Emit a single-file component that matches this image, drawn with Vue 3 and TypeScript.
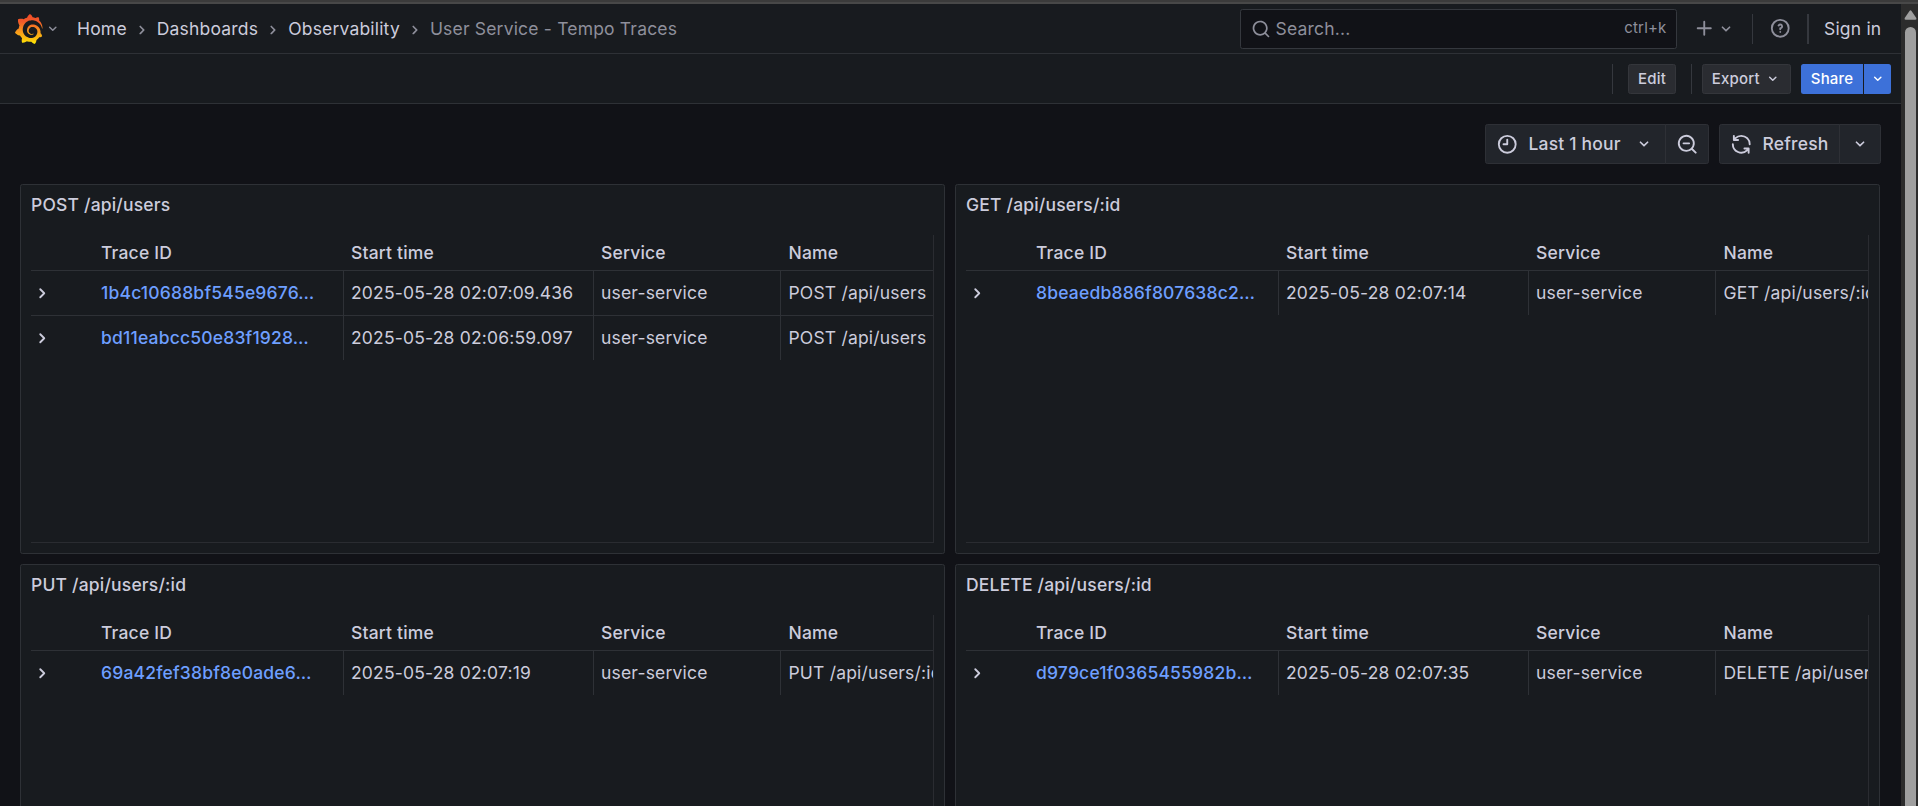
<script setup lang="ts">
interface TraceRow {
  id: string
  start: string
  service: string
  name: string
}
interface Panel {
  title: string
  rows: TraceRow[]
}

const icons = {
  down: 'M17,9.17a1,1,0,0,0-1.41,0L12,12.71,8.46,9.17a1,1,0,0,0-1.41,0,1,1,0,0,0,0,1.42l4.24,4.24a1,1,0,0,0,1.42,0L17,10.59A1,1,0,0,0,17,9.17Z',
  right: 'M14.83,11.29,10.59,7.05a1,1,0,0,0-1.42,0,1,1,0,0,0,0,1.41L12.71,12,9.17,15.54a1,1,0,0,0,0,1.41,1,1,0,0,0,.71.29,1,1,0,0,0,.71-.29l4.24-4.24A1,1,0,0,0,14.83,11.29Z',
  search: 'M21.71,20.29,18,16.61A9,9,0,1,0,16.61,18l3.68,3.68a1,1,0,0,0,1.42,0A1,1,0,0,0,21.71,20.29ZM11,18a7,7,0,1,1,7-7A7,7,0,0,1,11,18Z',
  minus: 'M14,10H8a1,1,0,0,0,0,2h6a1,1,0,0,0,0-2Z',
  plus: 'M19,11H13V5a1,1,0,0,0-2,0v6H5a1,1,0,0,0,0,2h6v6a1,1,0,0,0,2,0V13h6a1,1,0,0,0,0-2Z',
  help: 'M11.29,15.29a1.58,1.58,0,0,0-.12.15.76.76,0,0,0-.09.18.64.64,0,0,0-.06.18,1.36,1.36,0,0,0,0,.2.84.84,0,0,0,.08.38.9.9,0,0,0,.54.54.94.94,0,0,0,.76,0,.9.9,0,0,0,.54-.54A1,1,0,0,0,13,16a1,1,0,0,0-.29-.71A1,1,0,0,0,11.29,15.29ZM12,2A10,10,0,1,0,22,12,10,10,0,0,0,12,2Zm0,18a8,8,0,1,1,8-8A8,8,0,0,1,12,20ZM12,7A3,3,0,0,0,9.4,8.5a1,1,0,1,0,1.73,1A1,1,0,0,1,12,9a1,1,0,0,1,0,2,1,1,0,0,0-1,1v1a1,1,0,0,0,2,0v-.18A3,3,0,0,0,12,7Z',
  clock: 'M12,2A10,10,0,1,0,22,12,10,10,0,0,0,12,2Zm0,18a8,8,0,1,1,8-8A8,8,0,0,1,12,20ZM12,6a1,1,0,0,0-1,1v4H8a1,1,0,0,0,0,2h4a1,1,0,0,0,1-1V7A1,1,0,0,0,12,6Z',
  sync: 'M19.91,15.51H15.38a1,1,0,0,0,0,2h2.4A8,8,0,0,1,4,12a1,1,0,0,0-2,0,10,10,0,0,0,16.88,7.23V21a1,1,0,0,0,2,0V16.5A1,1,0,0,0,19.91,15.51ZM12,2A10,10,0,0,0,5.12,4.77V3a1,1,0,0,0-2,0V7.5a1,1,0,0,0,1,1h4.5a1,1,0,0,0,0-2H6.22A8,8,0,0,1,20,12a1,1,0,0,0,2,0A10,10,0,0,0,12,2Z',
  logo: 'M342,161.2c-0.6-6.1-1.6-13.1-3.6-20.9c-2-7.7-5-16.2-9.4-25c-4.4-8.8-10.1-17.9-17.5-26.8c-2.9-3.5-6.1-6.9-9.5-10.2c5.1-20.3-6.2-37.9-6.2-37.9c-19.5-1.2-31.9,6.1-36.5,9.4c-0.8-0.3-1.5-0.7-2.3-1c-3.3-1.3-6.7-2.6-10.3-3.7c-3.5-1.1-7.1-2.1-10.8-3c-3.7-0.9-7.4-1.6-11.2-2.2c-0.7-0.1-1.3-0.2-2-0.3c-8.5-27.2-32.9-38.6-32.9-38.6c-27.3,17.3-32.4,41.5-32.4,41.5s-0.1,0.5-0.3,1.4c-1.5,0.4-3,0.9-4.5,1.3c-2.1,0.6-4.2,1.4-6.2,2.2c-2.1,0.8-4.1,1.6-6.2,2.5c-4.1,1.8-8.2,3.8-12.2,6c-3.9,2.2-7.7,4.6-11.4,7.1c-0.5-0.2-1-0.4-1-0.4c-37.8-14.4-71.3,2.9-71.3,2.9c-3.1,40.2,15.1,65.5,18.7,70.1c-0.9,2.5-1.7,5-2.5,7.5c-2.8,9.1-4.9,18.4-6.2,28.1c-0.2,1.4-0.4,2.8-0.5,4.2C18.8,192.7,8.5,228,8.5,228c29.1,33.5,63.1,35.6,63.1,35.6c0,0,0.1-0.1,0.1-0.1c4.3,7.7,9.3,15,14.9,21.9c2.4,2.9,4.8,5.6,7.4,8.3c-10.6,30.4,1.5,55.6,1.5,55.6c32.4,1.2,53.7-14.2,58.2-17.7c3.2,1.1,6.5,2.1,9.8,2.9c10,2.6,20.2,4.1,30.4,4.5c2.5,0.1,5.1,0.2,7.6,0.1l1.2,0l0.8,0l1.6,0l1.6-0.1l0,0.1c15.3,21.8,42.1,24.9,42.1,24.9c19.1-20.1,20.2-40.1,20.2-44.4l0,0c0,0,0-0.1,0-0.3c0-0.4,0-0.6,0-0.6l0,0c0-0.3,0-0.6,0-0.9c4-2.8,7.8-5.8,11.4-9.1c7.6-6.9,14.3-14.8,19.9-23.3c0.5-0.8,1-1.6,1.5-2.4c21.6,1.2,36.9-13.4,36.9-13.4c-3.6-22.5-16.4-33.5-19.1-35.6l0,0c0,0-0.1-0.1-0.3-0.2c-0.2-0.1-0.2-0.2-0.2-0.2c0,0,0,0,0,0c-0.1-0.1-0.3-0.2-0.5-0.3c0.1-1.4,0.2-2.7,0.3-4.1c0.2-2.4,0.2-4.9,0.2-7.3l0-1.8l0-0.9l0-0.5c0-0.6,0-0.4,0-0.6l-0.1-1.5l-0.1-2c0-0.7-0.1-1.3-0.2-1.9c-0.1-0.6-0.1-1.3-0.2-1.9l-0.2-1.9l-0.3-1.9c-0.4-2.5-0.8-4.9-1.4-7.4c-2.3-9.7-6.1-18.9-11-27.2c-5-8.3-11.2-15.6-18.3-21.8c-7-6.2-14.9-11.2-23.1-14.9c-8.3-3.7-16.9-6.1-25.5-7.2c-4.3-0.6-8.6-0.8-12.9-0.7l-1.6,0l-0.4,0c-0.1,0-0.6,0-0.5,0l-0.7,0l-1.6,0.1c-0.6,0-1.2,0.1-1.7,0.1c-2.2,0.2-4.4,0.5-6.5,0.9c-8.6,1.6-16.7,4.7-23.8,9c-7.1,4.3-13.3,9.6-18.3,15.6c-5,6-8.9,12.7-11.6,19.6c-2.7,6.9-4.2,14.1-4.6,21c-0.1,1.7-0.1,3.5-0.1,5.2c0,0.4,0,0.9,0,1.3l0.1,1.4c0.1,0.8,0.1,1.7,0.2,2.5c0.3,3.5,1,6.9,1.9,10.1c1.9,6.5,4.9,12.4,8.6,17.4c3.7,5,8.2,9.1,12.9,12.4c4.7,3.2,9.8,5.5,14.8,7c5,1.5,10,2.1,14.7,2.1c0.6,0,1.2,0,1.7,0c0.3,0,0.6,0,0.9,0c0.3,0,0.6,0,0.9-0.1c0.5,0,1-0.1,1.5-0.1c0.1,0,0.3,0,0.4-0.1l0.5-0.1c0.3,0,0.6-0.1,0.9-0.1c0.6-0.1,1.1-0.2,1.7-0.3c0.6-0.1,1.1-0.2,1.6-0.4c1.1-0.2,2.1-0.6,3.1-0.9c2-0.7,4-1.5,5.7-2.4c1.8-0.9,3.4-2,5-3c0.4-0.3,0.9-0.6,1.3-1c1.6-1.3,1.9-3.7,0.6-5.3c-1.1-1.4-3.1-1.8-4.7-0.9c-0.4,0.2-0.8,0.4-1.2,0.6c-1.4,0.7-2.8,1.3-4.3,1.8c-1.5,0.5-3.1,0.9-4.7,1.2c-0.8,0.1-1.6,0.2-2.5,0.3c-0.4,0-0.8,0.1-1.3,0.1c-0.4,0-0.9,0-1.2,0c-0.4,0-0.8,0-1.2,0c-0.5,0-1,0-1.5-0.1l-0.6,0c-0.2,0-0.5,0-0.7-0.1c-0.5-0.1-0.9-0.1-1.4-0.2c-3.7-0.5-7.4-1.6-10.9-3.2c-3.6-1.6-7-3.8-10.1-6.6c-3.1-2.8-5.8-6.1-7.9-9.9c-2.1-3.8-3.6-8-4.3-12.4c-0.3-2.2-0.5-4.5-0.4-6.7c0-0.6,0.1-1.2,0.1-1.8l0-0.8c0-0.3,0.1-0.6,0.1-0.9c0.1-1.2,0.3-2.4,0.5-3.6c1.7-9.6,6.5-19,13.9-26.1c1.9-1.8,3.9-3.4,6-4.9c2.1-1.5,4.4-2.8,6.8-3.9c2.4-1.1,4.8-2,7.4-2.7c2.5-0.7,5.1-1.1,7.8-1.4c1.3-0.1,2.6-0.2,4-0.2c0.4,0,0.6,0,0.9,0l2.2,0l1.1,0.1c2.9,0.2,5.7,0.6,8.5,1.3c5.6,1.2,11.1,3.3,16.2,6.1c10.2,5.7,18.9,14.5,24.2,25.1c2.7,5.3,4.6,11,5.5,16.9c0.2,1.5,0.4,3,0.5,4.5l0.2,2.2l0,4.3c0,0.7-0.1,1.9-0.1,2.6c-0.1,1.6-0.3,3.3-0.5,4.9c-0.2,1.6-0.5,3.2-0.8,4.8c-0.3,1.6-0.7,3.2-1.1,4.7c-0.8,3.1-1.8,6.2-3,9.3c-2.4,6-5.6,11.8-9.4,17.1c-7.7,10.6-18.2,19.2-30.2,24.7c-6,2.7-12.3,4.7-18.8,5.7c-3.2,0.6-6.5,0.9-9.8,1l-4.6,0c-1.8,0-3.5-0.1-5.3-0.3c-7-0.5-13.9-1.8-20.7-3.7c-6.7-1.9-13.2-4.6-19.4-7.8c-12.3-6.6-23.4-15.6-32-26.5c-4.3-5.4-8.1-11.3-11.2-17.4c-3.1-6.1-5.6-12.6-7.4-19.1c-1.8-6.6-2.9-13.3-3.4-20.1l-0.1-1.3l0-6c0-0.8,0-1.7,0-2.5c0.1-3.3,0.4-6.8,0.8-10.2c0.4-3.4,1-6.9,1.7-10.3c0.7-3.4,1.5-6.8,2.5-10.2c1.9-6.7,4.3-13.2,7.1-19.3c5.7-12.2,13.1-23.1,22-31.8c2.2-2.2,4.5-4.2,6.9-6.2c2.4-1.9,4.9-3.7,7.5-5.4c2.5-1.7,5.2-3.2,7.9-4.6c1.3-0.7,2.7-1.4,4.1-2c1.4-0.6,2.8-1.2,4.2-1.8c2.8-1.2,5.7-2.2,8.7-3.1c1.5-0.5,2.9-0.9,4.4-1.3c1.5-0.4,3-0.8,4.5-1.1c1.5-0.3,3-0.7,4.6-1l4.6-0.8c0.8-0.1,1.5-0.2,2.3-0.3c1.7-0.2,3.5-0.4,5.2-0.6l3.8-0.4l5-0.3c0.7,0,1.5-0.1,2.2-0.1c2.9-0.1,5.9-0.1,8.8,0c5.8,0.2,11.5,0.9,17,1.9c11.1,2.1,21.5,5.6,31,10.3c9.5,4.6,17.9,10.3,25.3,16.5c0.5,0.4,0.9,0.8,1.4,1.2c0.4,0.4,0.9,0.8,1.3,1.2c0.9,0.8,1.7,1.6,2.6,2.4c0.9,0.8,1.7,1.6,2.5,2.4c0.8,0.8,1.6,1.6,2.4,2.5c3.1,3.3,6,6.6,8.6,10c5.2,6.7,9.4,13.5,12.7,19.9c0.8,1.6,1.6,3.2,2.3,4.8c0.8,1.5,1.5,3,2.1,4.6c1.2,3,2.4,5.9,3.3,8.6c1.5,4.4,2.6,8.3,3.5,11.7c0.3,1.4,1.6,2.3,3,2.1c1.5-0.1,2.6-1.3,2.6-2.8C342.6,170.4,342.5,166.1,342,161.2z',
}

const crumbs: string[] = ['Home', 'Dashboards', 'Observability']
const columns: string[] = ['', 'Trace ID', 'Start time', 'Service', 'Name']

const panels: Panel[] = [
  {
    title: 'POST /api/users',
    rows: [
      { id: '1b4c10688bf545e9676…', start: '2025-05-28 02:07:09.436', service: 'user-service', name: 'POST /api/users' },
      { id: 'bd11eabcc50e83f1928…', start: '2025-05-28 02:06:59.097', service: 'user-service', name: 'POST /api/users' },
    ],
  },
  {
    title: 'GET /api/users/:id',
    rows: [{ id: '8beaedb886f807638c2…', start: '2025-05-28 02:07:14', service: 'user-service', name: 'GET /api/users/:id' }],
  },
  {
    title: 'PUT /api/users/:id',
    rows: [{ id: '69a42fef38bf8e0ade6…', start: '2025-05-28 02:07:19', service: 'user-service', name: 'PUT /api/users/:id' }],
  },
  {
    title: 'DELETE /api/users/:id',
    rows: [{ id: 'd979ce1f0365455982b…', start: '2025-05-28 02:07:35', service: 'user-service', name: 'DELETE /api/users/:id' }],
  },
]
</script>

<template>
  <div class="window">
    <div class="edge"></div>
    <div class="body">
      <div class="app">
        <header class="nav">
          <svg class="logo" viewBox="0 0 351 365">
            <defs>
              <linearGradient id="flame" gradientUnits="userSpaceOnUse" x1="175" y1="365" x2="175" y2="20">
                <stop offset="0" stop-color="#fff100" />
                <stop offset="0.15" stop-color="#fdc70c" />
                <stop offset="0.48" stop-color="#f7931e" />
                <stop offset="0.78" stop-color="#f15a29" />
                <stop offset="1" stop-color="#f04e28" />
              </linearGradient>
            </defs>
            <path fill="url(#flame)" :d="icons.logo" />
          </svg>
          <svg class="i17 dim logo-caret" viewBox="0 0 24 24"><path :d="icons.down" /></svg>
          <nav class="crumbs">
            <template v-for="c in crumbs" :key="c">
              <a>{{ c }}</a>
              <svg class="i20 dim" viewBox="0 0 24 24"><path :d="icons.right" /></svg>
            </template>
            <span class="current">User Service - Tempo Traces</span>
          </nav>
          <div class="search">
            <svg class="i20" viewBox="0 0 24 24"><path :d="icons.search" /></svg>
            <span class="placeholder">Search...</span>
            <span class="kbd">ctrl+k</span>
          </div>
          <div class="add dim">
            <svg class="plus" viewBox="0 0 24 24"><path :d="icons.plus" /></svg>
            <svg class="i20" viewBox="0 0 24 24"><path :d="icons.down" /></svg>
          </div>
          <div class="rule"></div>
          <svg class="i22 dim help" viewBox="0 0 24 24"><path :d="icons.help" /></svg>
          <div class="rule r2"></div>
          <a class="signin">Sign in</a>
        </header>

        <div class="actions">
          <div class="rule a1"></div>
          <button class="btn edit">Edit</button>
          <div class="rule a2"></div>
          <button class="btn export">Export<svg class="i17" viewBox="0 0 24 24"><path :d="icons.down" /></svg></button>
          <button class="btn share">Share</button>
          <button class="btn share-caret"><svg class="i17" viewBox="0 0 24 24"><path :d="icons.down" /></svg></button>
        </div>

        <div class="controls">
          <div class="group">
            <button class="tool range">
              <svg class="i22" viewBox="0 0 24 24"><path :d="icons.clock" /></svg>
              <span>Last 1 hour</span>
              <svg class="i20" viewBox="0 0 24 24"><path :d="icons.down" /></svg>
            </button>
            <button class="tool zoom">
              <svg class="i22" viewBox="0 0 24 24"><path :d="icons.search" /><path :d="icons.minus" /></svg>
            </button>
          </div>
          <div class="group">
            <button class="tool refresh">
              <svg class="i22" viewBox="0 0 24 24"><path :d="icons.sync" /></svg>
              <span>Refresh</span>
            </button>
            <button class="tool interval">
              <svg class="i20" viewBox="0 0 24 24"><path :d="icons.down" /></svg>
            </button>
          </div>
        </div>

        <main class="grid">
          <section v-for="p in panels" :key="p.title" class="panel">
            <h2>{{ p.title }}</h2>
            <div class="table">
              <div class="tr head">
                <div v-for="c in columns" :key="c" class="th">{{ c }}</div>
              </div>
              <div v-for="r in p.rows" :key="r.id" class="tr row">
                <div class="td toggle"><svg class="i22" viewBox="0 0 24 24"><path :d="icons.right" /></svg></div>
                <div class="td"><a class="link">{{ r.id }}</a></div>
                <div class="td">{{ r.start }}</div>
                <div class="td">{{ r.service }}</div>
                <div class="td">{{ r.name }}</div>
              </div>
            </div>
          </section>
        </main>
      </div>
      <div class="scrollbar">
        <svg class="arrow" viewBox="0 0 13 10"><path d="M6.5 0.3Q7 .3 7.5 1L12.3 8Q13 9.6 11.4 9.7H1.6Q0 9.6 .7 8L5.5 1Q6 .3 6.5 .3Z" /></svg>
        <div class="thumb"></div>
      </div>
    </div>
  </div>
</template>

<style>
body {
  background: #111217;
  overflow: hidden;
}
</style>

<style scoped>
.window {
  width: 1918px;
  height: 806px;
  overflow: hidden;
  display: flex;
  flex-direction: column;
  background: #111217;
  color: #ccccdc;
  font: 400 17.5px/27.5px Inter, "Liberation Sans", sans-serif;
  letter-spacing: 0.01071em;
}
.window * {
  box-sizing: border-box;
}
.edge {
  flex: none;
  height: 4px;
  background: #484848;
  border-top: 2px solid #3b3b3b;
}
.body {
  flex: 1;
  min-height: 0;
  display: flex;
}
.app {
  flex: 1;
  min-width: 0;
  height: 802px;
  overflow: hidden;
}
svg {
  display: block;
  flex: none;
  fill: currentColor;
}
.i17 {
  width: 17.5px;
  height: 17.5px;
}
.i20 {
  width: 20px;
  height: 20px;
}
.i22 {
  width: 22.5px;
  height: 22.5px;
}
.dim {
  color: #8e8f9b;
}
.rule {
  flex: none;
  width: 1px;
  height: 30px;
  background: #35383e;
}

.nav {
  display: flex;
  align-items: center;
  height: 50px;
  padding-left: 14px;
  background: #181b1f;
  border-bottom: 1px solid #2e3136;
}
.logo {
  width: 29.5px;
  height: 30px;
}
.logo-caret {
  margin-left: 0.5px;
}
.crumbs {
  display: flex;
  align-items: center;
  margin-left: 15.5px;
  white-space: nowrap;
}
.crumbs svg {
  margin: 2px 5px 0;
}
.current {
  color: #8e8f9b;
}
.search {
  display: flex;
  align-items: center;
  width: 437px;
  height: 40px;
  margin-left: auto;
  padding: 0 9px 0 10px;
  background: #111217;
  border: 1px solid #35383e;
  border-radius: 2.5px;
  color: #8e8f9b;
}
.placeholder {
  margin-left: 5px;
}
.kbd {
  margin-left: auto;
  margin-top: -2px;
  font-size: 15px;
}
.add {
  display: flex;
  align-items: center;
  width: 75px;
  padding-left: 16px;
}
.plus {
  width: 22.5px;
  height: 22.5px;
}
.add .i20 {
  margin-left: 1px;
}
.help {
  margin: 0 16px;
}
.r2 {
  width: 2px;
}
.signin {
  width: 77px;
  margin-left: 15px;
}

.actions {
  display: flex;
  align-items: center;
  justify-content: flex-end;
  height: 50px;
  padding-right: 10px;
  background: #181b1f;
  border-bottom: 1px solid #2e3136;
}
button {
  margin: 0;
  padding: 0;
  border: 0;
  color: inherit;
  font: inherit;
  letter-spacing: inherit;
}
.btn {
  display: flex;
  align-items: center;
  justify-content: center;
  height: 30px;
  border: 1px solid #34363b;
  border-radius: 2.5px;
  background: #2a2c31;
  font-size: 15px;
  font-weight: 500;
}
.a1 {
  margin-right: 15px;
}
.edit {
  width: 48px;
}
.a2 {
  margin: 0 10px 0 15px;
}
.export {
  width: 89px;
}
.export svg {
  margin-left: 4px;
}
.share {
  width: 62px;
  margin-left: 10px;
  border: 0;
  border-radius: 2.5px 0 0 2.5px;
  background: #3d71d9;
  color: #fff;
}
.share-caret {
  width: 27px;
  margin-left: 1px;
  border: 0;
  border-radius: 0 2.5px 2.5px 0;
  background: #3d71d9;
  color: #fff;
}

.controls {
  display: flex;
  justify-content: flex-end;
  gap: 10px;
  padding: 20px 20px;
}
.group {
  display: flex;
}
.tool {
  display: flex;
  align-items: center;
  height: 40px;
  border: 1px solid #2e3036;
  border-radius: 2.5px;
  background: #22252b;
  font-weight: 500;
  white-space: nowrap;
}
.range {
  width: 181px;
  padding-left: 10px;
  border-radius: 2.5px 0 0 2.5px;
}
.range span {
  margin: 0 13px 0 10px;
}
.zoom {
  width: 44px;
  margin-left: -1px;
  justify-content: center;
  border-radius: 0 2.5px 2.5px 0;
}
.refresh {
  width: 121px;
  padding-left: 10px;
  border-radius: 2.5px 0 0 2.5px;
}
.refresh span {
  margin-left: 10px;
}
.interval {
  width: 42px;
  margin-left: -1px;
  justify-content: center;
  border-radius: 0 2.5px 2.5px 0;
}

.grid {
  display: grid;
  grid-template-columns: 925px 925px;
  grid-auto-rows: 370px;
  gap: 10px;
  padding: 0 20px;
}
.panel {
  display: flex;
  flex-direction: column;
  padding: 0 10px 10px;
  background: #181b1f;
  border: 1px solid #2e3136;
  border-radius: 2.5px;
}
h2 {
  margin: 0;
  height: 50px;
  padding-top: 6px;
  font-size: 17.5px;
  font-weight: 500;
}
.table {
  flex: 1;
  overflow: hidden;
  border-right: 1px solid #2a2c31;
  border-bottom: 1px solid #2a2c31;
}
.tr {
  display: grid;
  grid-template-columns: 62.5px 250px 250px 187.5px 375px;
  width: 1125px;
}
.th {
  height: 36px;
  padding: 4px 7.5px;
  font-weight: 500;
  border-bottom: 1px solid #2e3136;
}
.row {
  height: 45px;
}
.td {
  height: 45px;
  padding: 8px 7.5px;
  border-right: 1px solid #2e3136;
  border-bottom: 1px solid #2e3136;
  white-space: nowrap;
}
.row:last-child .td {
  height: 44px;
  border-bottom: 0;
}
.row .toggle {
  display: flex;
  padding: 10.5px 0 0;
  border-right: 0;
}
.link {
  color: #6e9fff;
  font-weight: 500;
}

.scrollbar {
  flex: none;
  display: flex;
  flex-direction: column;
  align-items: center;
  width: 17px;
  padding: 6px 0 0 2px;
  background: #2c2c2c;
}
.arrow {
  width: 13px;
  height: 10px;
  fill: #9f9f9f;
}
.thumb {
  width: 11px;
  flex: 1;
  margin-top: 7px;
  border-radius: 5.5px 5.5px 0 0;
  background: #9f9f9f;
}
</style>
